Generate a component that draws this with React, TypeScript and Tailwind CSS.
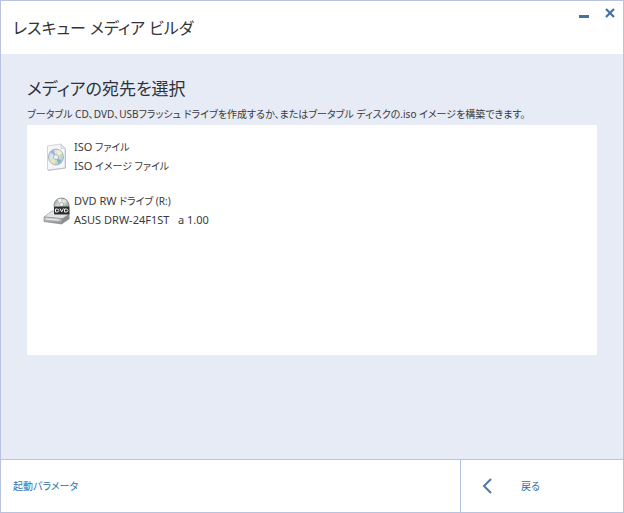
import { type ReactNode } from 'react';

interface Destination {
  id: string;
  name: ReactNode;
  description: ReactNode;
  icon: ReactNode;
}

function IsoFileIcon() {
  return (
    <svg width="28" height="28" viewBox="0 0 28 28" aria-hidden="true">
      <defs>
        <linearGradient id="iso-disc" x1="0" y1="0" x2="1" y2="1">
          <stop offset="0" stopColor="#b4c4d8" />
          <stop offset="0.35" stopColor="#dfe6ea" />
          <stop offset="0.55" stopColor="#dcdfb0" />
          <stop offset="0.75" stopColor="#b4d3e0" />
          <stop offset="1" stopColor="#a6b3c8" />
        </linearGradient>
      </defs>
      <path d="M4.500 3 18 1l4 4v20L4.500 27z" fill="#f6f7fa" stroke="#d3d5dd" />
      <path d="M18 1v4.500l4-.5z" fill="#e2e4ec" stroke="#c6c9d3" strokeWidth="0.700" />
      <path d="M22.500 5.500V25L5 27.500" fill="none" stroke="#b4b7c1" strokeWidth="0.800" />
      <ellipse cx="13" cy="14" rx="7.500" ry="8" fill="url(#iso-disc)" stroke="#a3afbd" strokeWidth="0.900" />
      <path d="M13 14 7.500 9l3-2.300z" fill="#8ab8d6" />
      <path d="m13 14 5.500 4-3 3z" fill="#80b0d2" />
      <path d="m13 14 3-7 3 3z" fill="#f5f1c8" />
      <path d="m13 14-5.500 5 4 2.500z" fill="#e6e9b8" />
      <circle cx="13" cy="14" r="2.500" fill="#eef1f5" stroke="#a2adba" strokeWidth="0.800" />
    </svg>
  );
}

function DvdDriveIcon() {
  return (
    <svg width="28" height="28" viewBox="0 0 28 28" aria-hidden="true">
      <defs>
        <linearGradient id="dvd-disc" x1="0" y1="0" x2="1" y2="1">
          <stop offset="0" stopColor="#8b9092" />
          <stop offset="0.450" stopColor="#e6eae3" />
          <stop offset="0.650" stopColor="#a9b5a4" />
          <stop offset="1" stopColor="#777b7d" />
        </linearGradient>
        <linearGradient id="dvd-front" x1="0" y1="0" x2="0" y2="1">
          <stop offset="0" stopColor="#d9dadb" />
          <stop offset="1" stopColor="#88898b" />
        </linearGradient>
      </defs>
      <path d="M1 20 9 14h16l1.500 3-7.500 5.500z" fill="#e2e3e4" stroke="#a8aaac" strokeWidth="0.800" />
      <path d="m1 20 18 1.500V27L1 24.500z" fill="url(#dvd-front)" stroke="#85878a" strokeWidth="0.700" />
      <path d="m19 21.500 7.500-4.500v5L19 27z" fill="#8a8c8e" />
      <path d="m3 22 13 1.200" stroke="#f1f1f1" strokeWidth="1.200" />
      <circle cx="18.500" cy="8.500" r="7.500" fill="url(#dvd-disc)" stroke="#85898b" />
      <path d="m18.500 7.500-4-5 3.500-1z" fill="#f3f5f0" />
      <circle cx="18.500" cy="7.500" r="2" fill="#f5f5f5" stroke="#8d9193" strokeWidth="0.700" />
      <rect x="11" y="9.500" width="15.500" height="8" rx="1" fill="#2b2c2e" />
      <g fill="none" stroke="#f2f2f2">
        <path d="M12.500 12H14q2 0 2 1.500T14 15h-1.500z" />
        <path d="m17 11.500 1.700 3.500 1.700-3.500" />
        <path d="M21.500 12H23q2 0 2 1.500T23 15h-1.500z" />
      </g>
    </svg>
  );
}

// Latin runs are set one step larger than the kana beside them
function Latin({ children }: { children: ReactNode }) {
  return <span className="text-[11px] leading-none">{children}</span>;
}

const destinations: Destination[] = [
  {
    id: 'iso',
    name: <><Latin>ISO</Latin> ファイル</>,
    description: <><Latin>ISO</Latin> イメージ ファイル</>,
    icon: <IsoFileIcon />,
  },
  {
    id: 'dvd',
    name: <><Latin>DVD RW</Latin> ドライブ (R:)</>,
    description: <Latin>{'ASUS DRW-24F1ST\u00a0\u00a0\u00a0a 1.00'}</Latin>,
    icon: <DvdDriveIcon />,
  },
];

function TitleBar() {
  return (
    <header className="flex h-[53px] items-start justify-between bg-white">
      <h1 className="pl-3 pt-3 text-[16px] leading-[30px] text-[#333338]">レスキュー メディア ビルダ</h1>
      <div className="flex gap-1 pr-0.5 pt-0.5">
        <button type="button" aria-label="最小化" className="flex size-[22px] items-center justify-center text-[#4470a4]">
          <svg width="12" height="12" viewBox="0 0 12 12" aria-hidden="true">
            <path d="M1 8.500h10" stroke="currentColor" strokeWidth="3" />
          </svg>
        </button>
        <button type="button" aria-label="閉じる" className="flex size-[22px] items-center justify-center text-[#4470a4]">
          <svg width="12" height="12" viewBox="0 0 12 12" aria-hidden="true">
            <path d="m2 1 8 8M10 1 2 9" stroke="currentColor" strokeWidth="2.200" />
          </svg>
        </button>
      </div>
    </header>
  );
}

export default function App() {
  return (
    <div className="flex min-h-screen flex-col border border-[#b7c3df] bg-[#e6ebf5] font-['Noto_Sans','Noto_Sans_CJK_JP',sans-serif] text-[10px] text-[#3a3a40] [font-feature-settings:'palt']">
      <TitleBar />

      <main className="flex-1 px-[26px] pb-[104px] pt-5">
        <h2 className="text-[17px] leading-[30px] text-[#2c323c]">メディアの宛先を選択</h2>
        <p className="mb-px leading-5">
          ブータブル CD、DVD、USBフラッシュ ドライブを作成するか、またはブータブル ディスクの.iso イメージを構築できます。
        </p>
        <ul className="flex min-h-[230px] flex-col gap-4 bg-white px-4 py-[13px]">
          {destinations.map((item) => (
            <li key={item.id}>
              <button type="button" className="flex w-full items-center gap-[3px] text-left">
                {item.icon}
                <span className="leading-[19px]">
                  <span className="block">{item.name}</span>
                  <span className="block">{item.description}</span>
                </span>
              </button>
            </li>
          ))}
        </ul>
      </main>

      <footer className="flex h-[53px] border-t border-[#b7c3df] bg-white text-[#2f6fa8]">
        <div className="flex flex-1 items-center pl-3">
          <a href="#boot-parameters">起動パラメータ</a>
        </div>
        <button type="button" className="flex w-[163px] items-center border-l border-[#b0c6de] pl-5">
          <svg width="12" height="18" viewBox="0 0 12 18" aria-hidden="true">
            <path d="M10 2 3 9l7 7" fill="none" stroke="#4d78a8" strokeWidth="2" />
          </svg>
          <span className="pl-7">戻る</span>
        </button>
      </footer>
    </div>
  );
}
